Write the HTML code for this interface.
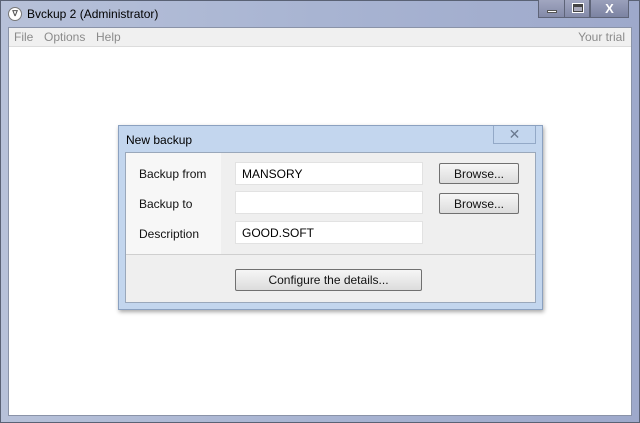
<!DOCTYPE html>
<html><head><meta charset="utf-8"><style>
*{margin:0;padding:0;box-sizing:border-box}
body{width:640px;height:423px;overflow:hidden;font-family:"Liberation Sans",sans-serif;font-size:12px;background:#a9b6d2;position:relative}
.frame{position:absolute;left:0;top:0;width:640px;height:423px;background:linear-gradient(90deg,#b7c1d9 0%,#a8b4d2 50%,#9ea9cb 100%);border:1px solid #5a6275}
.title{position:absolute;left:27px;top:7px;font-size:12px;color:#000}
.icon{position:absolute;left:8px;top:7px;width:14px;height:14px;border-radius:50%;background:#fff;border:1px solid #777;font-size:8px;text-align:center;line-height:12px;color:#555;font-weight:bold}
.wb{position:absolute;top:0;height:18px;background:linear-gradient(#a1a6c0,#838aa8);border:1px solid #5e6478;border-top:none}
.client{position:absolute;left:8px;top:27px;width:624px;height:389px;background:#fff;border:1px solid #8a93a8}
.menu{height:19px;background:#f0f0f0;border-bottom:1px solid #dcdcdc;color:#8b8b8b;font-size:12px;line-height:18px;position:relative}
.menu span{position:absolute;top:0}
.dlg{position:absolute;left:118px;top:125px;width:425px;height:185px;background:#c3d6ee;border:1px solid #8ba1c0;box-shadow:1px 2px 4px rgba(0,0,0,.35)}
.dtitle{position:absolute;left:7px;top:7px;font-size:12px}
.dx{position:absolute;left:374px;top:0;width:43px;height:18px;border:1px solid #93a9c7;border-top:none;color:#6b7a90;text-align:center;font-size:14px;line-height:16px}
.inner{position:absolute;left:6px;top:26px;width:411px;height:151px;background:#efefef;border:1px solid #9aa8bb}
.lcol{position:absolute;left:0;top:0;width:95px;height:101px;background:#f7f7f7}
.sep{position:absolute;left:0;top:101px;width:409px;height:1px;background:#cfcfcf}
.lbl{position:absolute;left:13px;font-size:12px;color:#111}
.inp{position:absolute;left:109px;width:188px;height:23px;background:#fff;border:1px solid #e2e2e2;padding-left:6px;line-height:23px;font-size:12px}
.btn{position:absolute;background:linear-gradient(#f6f6f6,#dcdcdc);border:1px solid #707070;border-radius:2px;text-align:center;line-height:20px;font-size:12px;color:#111}
</style></head><body>
<div class="frame"></div>
<div class="icon">∇</div>
<div class="title">Bvckup 2 (Administrator)</div>
<div class="wb" style="left:538px;width:26px;border-right:none"><div style="position:absolute;left:8px;top:10px;width:10px;height:3px;background:#fff;border:1px solid #555"></div></div>
<div class="wb" style="left:564px;width:26px"><div style="position:absolute;left:8px;top:4px;width:10px;height:8px;border:1px solid #444;border-top-width:3px;background:#aab;outline:1px solid #fff"></div></div>
<div class="wb" style="left:590px;width:39px;background:linear-gradient(#9aa0bb,#7c83a2);color:#fff;font-weight:bold;text-align:center;font-size:13px;line-height:17px">X</div>
<div class="client">
<div class="menu"><span style="left:5px">File</span><span style="left:35px">Options</span><span style="left:87px">Help</span><span style="right:6px">Your trial</span></div>
</div>
<div class="dlg">
<div class="dtitle">New backup</div>
<div class="dx">✕</div>
<div class="inner">
<div class="lcol"></div>
<div class="sep"></div>
<div class="lbl" style="top:14px">Backup from</div>
<div class="lbl" style="top:44px">Backup to</div>
<div class="lbl" style="top:74px">Description</div>
<div class="inp" style="top:9px">MANSORY</div>
<div class="inp" style="top:38px"></div>
<div class="inp" style="top:68px">GOOD.SOFT</div>
<div class="btn" style="left:313px;top:10px;width:80px;height:21px">Browse...</div>
<div class="btn" style="left:313px;top:40px;width:80px;height:21px">Browse...</div>
<div class="btn" style="left:109px;top:116px;width:187px;height:22px">Configure the details...</div>
</div>
</div>
</body></html>
